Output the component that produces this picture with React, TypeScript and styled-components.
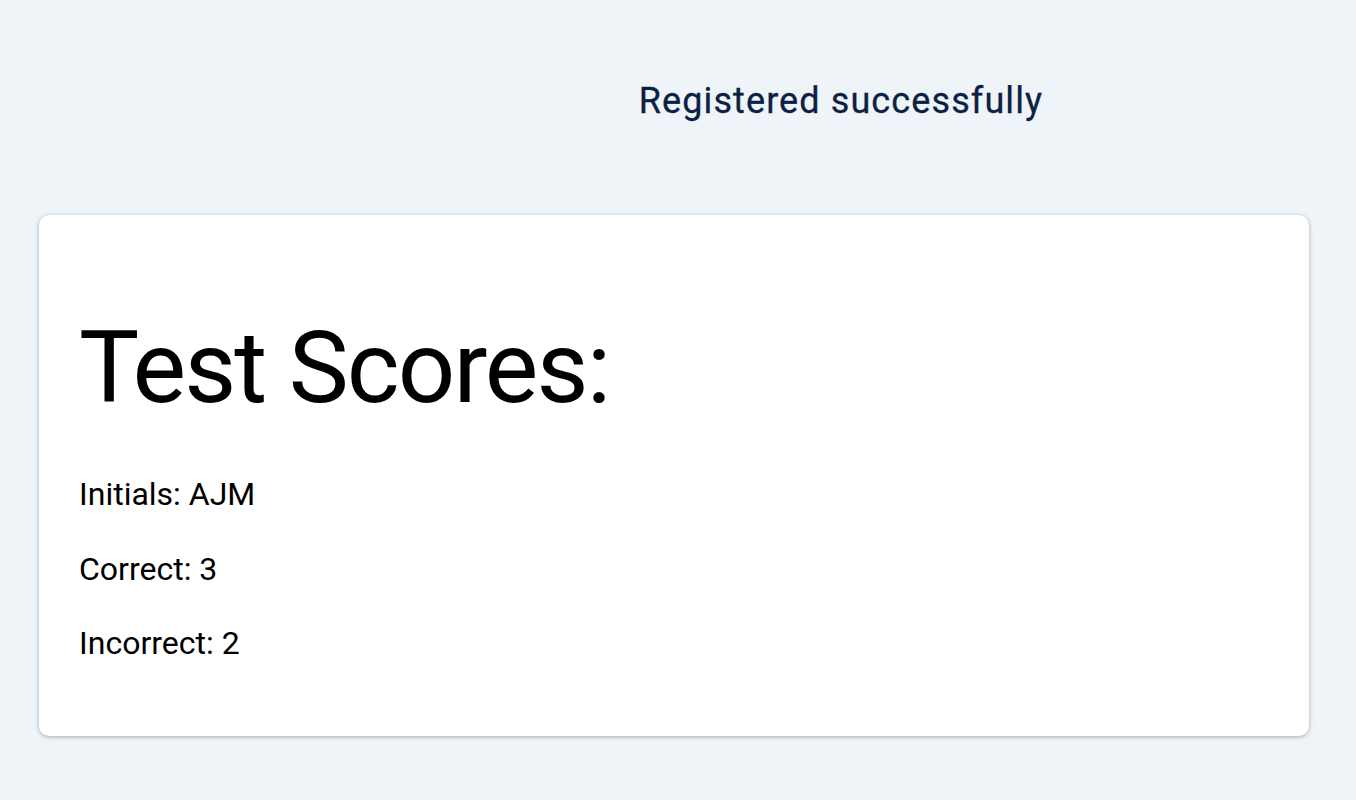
import React from "react";
import styled, { createGlobalStyle } from "styled-components";

const GlobalStyle = createGlobalStyle`
  html, body {
    margin: 0;
    padding: 0;
    background: #eff4f8;
    font-family: Roboto, "Liberation Sans", Arial, sans-serif;
  }
`;

const Page = styled.div`
  min-height: 800px;
  background: #eff4f8;
  padding: 80px 47px 0 39px;
  box-sizing: border-box;
`;

const Header = styled.header`
  display: flex;
  justify-content: center;
  padding-left: 334px;
  margin-bottom: 93px;
`;

const Notice = styled.h2`
  margin: 0;
  font-size: 36px;
  font-weight: 400;
  letter-spacing: 1.1px;
  line-height: 42px;
  color: #0c1f44;
  -webkit-text-stroke: 0.3px #0c1f44;
`;

const Card = styled.section`
  background: #ffffff;
  border-radius: 10px;
  box-shadow: 0 1px 4px rgba(0, 0, 0, 0.3);
  padding: 40px 40px 39px 40px;
`;

const Title = styled.h1`
  margin: 53px 0 46px 0;
  font-size: 101px;
  font-weight: 400;
  letter-spacing: -1.9px;
  line-height: normal;
  color: #000;
`;

const Line = styled.p`
  margin: 0 0 32px 0;
  font-size: 32px;
  line-height: 42.5px;
  color: #000;
`;

export default function App() {
  return (
    <>
      <GlobalStyle />
      <Page>
        <Header>
          <Notice>Registered successfully</Notice>
        </Header>
        <Card>
          <Title>Test Scores:</Title>
          <Line>Initials: AJM</Line>
          <Line>Correct: 3</Line>
          <Line>Incorrect: 2</Line>
        </Card>
      </Page>
    </>
  );
}
